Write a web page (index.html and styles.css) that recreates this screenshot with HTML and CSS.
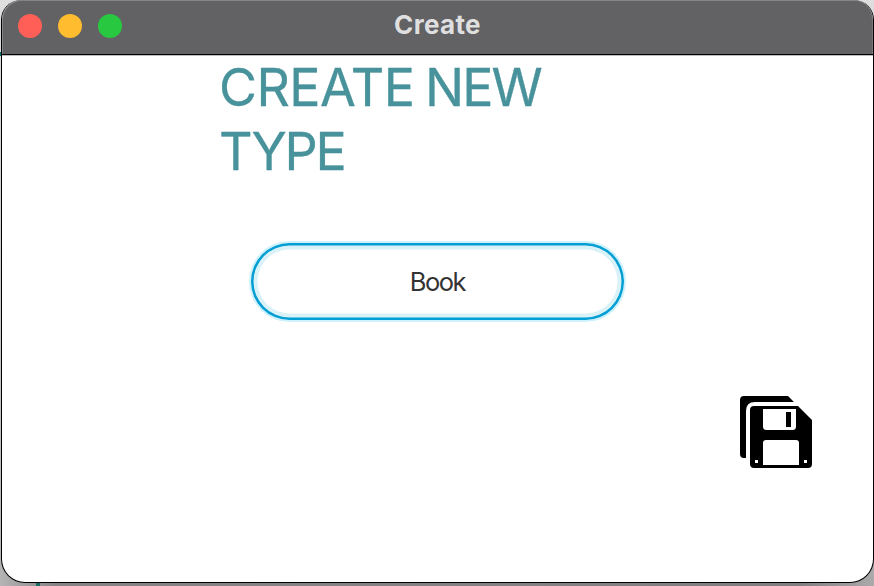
FILE: index.html
```html
<!DOCTYPE html>
<html lang="en">
<head>
<meta charset="utf-8">
<title>Create</title>
<link rel="stylesheet" href="styles.css">
</head>
<body>
<main class="window">
  <header class="titlebar">
    <div class="controls">
      <span class="dot close"></span>
      <span class="dot minimize"></span>
      <span class="dot maximize"></span>
    </div>
    <div class="title">Create</div>
  </header>
  <section class="content">
    <h1 class="heading"><span class="loose">CREATE</span> NEW<br><span class="tight">TYPE</span></h1>
    <button class="type-button" type="button"><span class="type-label">Book</span></button>
    <svg class="save" viewBox="0 0 72 72" aria-label="Save">
      <path d="M4 0H48L54 6H15Q6 6 6 15V62H4Q0 62 0 58V4Q0 0 4 0Z"/>
      <path fill-rule="evenodd" d="M14 10H58L72 24V68Q72 72 68 72H14Q10 72 10 68V14Q10 10 14 10ZM23 13V30.500Q23 34 26.500 34H52.500Q56 34 56 30.500V13ZM46 16H51V31H46ZM26 44Q23 44 23 47V69H59V47Q59 44 56 44ZM15 64V67H18V64ZM64 64V67H67V64Z"/>
    </svg>
  </section>
</main>
</body>
</html>
```
FILE: styles.css
```css
* {
  box-sizing: border-box;
}

body {
  margin: 0;
  width: 874px;
  height: 586px;
  overflow: hidden;
  background:
    linear-gradient(#176b64, #176b64) 36px 582px / 4px 4px no-repeat,
    linear-gradient(#087568, #087568) 0 52px / 1px 4px no-repeat,
    linear-gradient(90deg, #b4b4b4 0, #858585 55px, #808080 800px, #aaa 100%) 0 560px / 100% 26px no-repeat,
    linear-gradient(#dedede, #b5b5b5);
  font-family: Inter, "Liberation Sans", sans-serif;
}

.window {
  display: flex;
  flex-direction: column;
  width: 873px;
  height: 583px;
  margin-left: 1px;
  border: 1px solid #000;
  border-top: 0;
  border-radius: 20px 20px 24px 24px;
  background: #fff;
  overflow: hidden;
}

.titlebar {
  display: grid;
  grid-template-columns: 1fr auto 1fr;
  align-items: center;
  flex: none;
  height: 55px;
  padding: 0 16px 3px 16px;
  border-bottom: 1px solid #000;
  border-radius: 19px 19px 0 0;
  background: #626264;
  box-shadow: inset 1px 1px 0 #858587, inset -1px 0 0 #7b7b7d;
}

.controls {
  display: flex;
  gap: 16px;
  padding-top: 1px;
}

.dot {
  width: 24px;
  height: 24px;
  border-radius: 50%;
}

.close { background: #ff5f57; }
.minimize { background: #febc2e; }
.maximize { background: #28c840; }

.title {
  margin-top: -2px;
  color: #dfdfe0;
  font-size: 26px;
  font-weight: 700;
  line-height: 30px;
  letter-spacing: 0.35px;
}

.content {
  display: flex;
  flex-direction: column;
  flex: 1;
  border-top: 1px solid #bdbdbd;
}

.heading {
  margin: 0 0 59px 217px;
  color: #48929b;
  font-size: 52px;
  font-weight: 400;
  line-height: 64px;
  letter-spacing: -2px;
  word-spacing: -2px;
  white-space: nowrap;
  -webkit-text-stroke: 0.3px #48929b;
}

.loose { letter-spacing: -0.6px; }
.tight { letter-spacing: -2.2px; }

.type-button {
  width: 373px;
  height: 77px;
  margin: 0 0 0 249px;
  padding: 0;
  border: 0;
  border-radius: 39px;
  background: #fff;
  box-shadow: 0 0 0 2px #cdf2fb, inset 0 0 0 2.5px #039ed3, inset 0 0 0 6.5px #d9f2f8;
  color: #333;
  font-family: inherit;
  font-size: 25.5px;
  line-height: 32px;
  letter-spacing: -1.5px;
}

.save {
  width: 72px;
  height: 72px;
  margin: 76px 61px 0 auto;
}
```
